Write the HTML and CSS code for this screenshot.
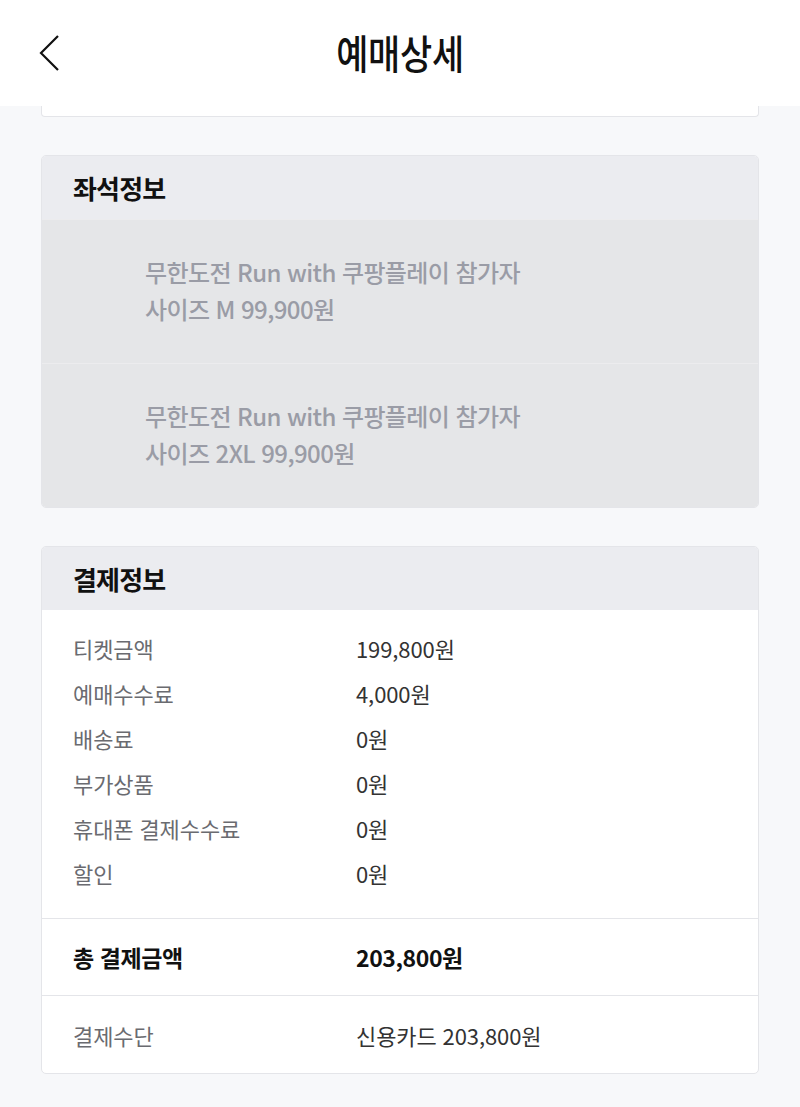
FILE: index.html
```html
<!DOCTYPE html>
<html lang="ko">
<head>
<meta charset="utf-8">
<link rel="stylesheet" href="styles.css">
</head>
<body>
<header class="topbar">
  <button class="back" aria-label="뒤로">
    <svg width="22" height="36" viewBox="0 0 22 36"><path d="M19 1 L2 18 L19 35" fill="none" stroke="#111" stroke-width="2.2"/></svg>
  </button>
  <h1 class="title">예매상세</h1>
</header>
<main class="content">
  <div class="card-tail"></div>

  <section class="card">
    <div class="card-head">좌석정보</div>
    <div class="seat">
      <p>무한도전 Run with 쿠팡플레이 참가자</p>
      <p>사이즈 M 99,900원</p>
    </div>
    <div class="seat">
      <p>무한도전 Run with 쿠팡플레이 참가자</p>
      <p>사이즈 2XL 99,900원</p>
    </div>
  </section>

  <section class="card">
    <div class="card-head">결제정보</div>
    <div class="pay-list">
      <div class="row"><span class="label">티켓금액</span><span class="value">199,800원</span></div>
      <div class="row"><span class="label">예매수수료</span><span class="value">4,000원</span></div>
      <div class="row"><span class="label">배송료</span><span class="value">0원</span></div>
      <div class="row"><span class="label">부가상품</span><span class="value">0원</span></div>
      <div class="row"><span class="label">휴대폰 결제수수료</span><span class="value">0원</span></div>
      <div class="row"><span class="label">할인</span><span class="value">0원</span></div>
    </div>
    <div class="row total"><span class="label">총 결제금액</span><span class="value">203,800원</span></div>
    <div class="row method"><span class="label">결제수단</span><span class="value">신용카드 203,800원</span></div>
  </section>
</main>
</body>
</html>
```

FILE: styles.css
```css
* { box-sizing: border-box; }
html, body { margin: 0; padding: 0; }
body {
  background: #f7f8fa;
  font-family: "Noto Sans CJK KR", "Noto Sans", sans-serif;
  color: #111;
  height: 1107px;
  overflow: hidden;
}
.topbar {
  height: 106px;
  background: #fff;
  display: flex;
  align-items: center;
  justify-content: center;
  position: relative;
}
.back {
  position: absolute;
  left: 39px;
  top: 35px;
  border: 0;
  background: none;
  padding: 0;
  display: flex;
}
.title {
  margin: 0 0 4px;
  font-size: 35px;
  font-weight: 500;
  letter-spacing: -0.3px;
  transform: scaleY(1.15);
  color: #111;
}
.content {
  padding: 0 41px 0 41px;
  display: flex;
  flex-direction: column;
  gap: 38px;
}
.card-tail {
  height: 11px;
  background: #fff;
  border: 1px solid #e4e5e9;
  border-top: 0;
  border-radius: 0 0 4px 4px;
}
.card {
  background: #fff;
  border: 1px solid #e4e5e9;
  border-radius: 5px;
  overflow: hidden;
}
.card-head {
  height: 63px;
  background: #ebecf0;
  display: flex;
  align-items: center;
  padding-left: 31px;
  font-size: 26px;
  font-weight: 700;
  letter-spacing: -0.8px;
  color: #111;
}
.seat {
  height: 144px;
  background: #e5e6e8;
  border-top: 1px solid #ececee;
  display: flex;
  flex-direction: column;
  justify-content: center;
  padding-left: 103px;
  padding-bottom: 4px;
}
.seat p {
  margin: 0;
  font-size: 24px;
  font-weight: 500;
  line-height: 37px;
  letter-spacing: -0.6px;
  color: #9a9ca6;
}
.pay-list {
  padding: 15px 0 23px;
}
.row {
  display: flex;
  align-items: center;
  height: 45px;
  padding-left: 31px;
  font-size: 22px;
  letter-spacing: -0.1px;
}
.row .label {
  width: 283px;
  color: #6a6b70;
}
.row .value {
  color: #333;
}
.total {
  height: 78px;
  border-top: 1px solid #e4e5e9;
  border-bottom: 1px solid #e4e5e9;
}
.total .label, .total .value {
  color: #111;
  font-weight: 700;
  font-size: 23px;
  letter-spacing: -0.4px;
}
.method {
  height: 77px;
}
```
